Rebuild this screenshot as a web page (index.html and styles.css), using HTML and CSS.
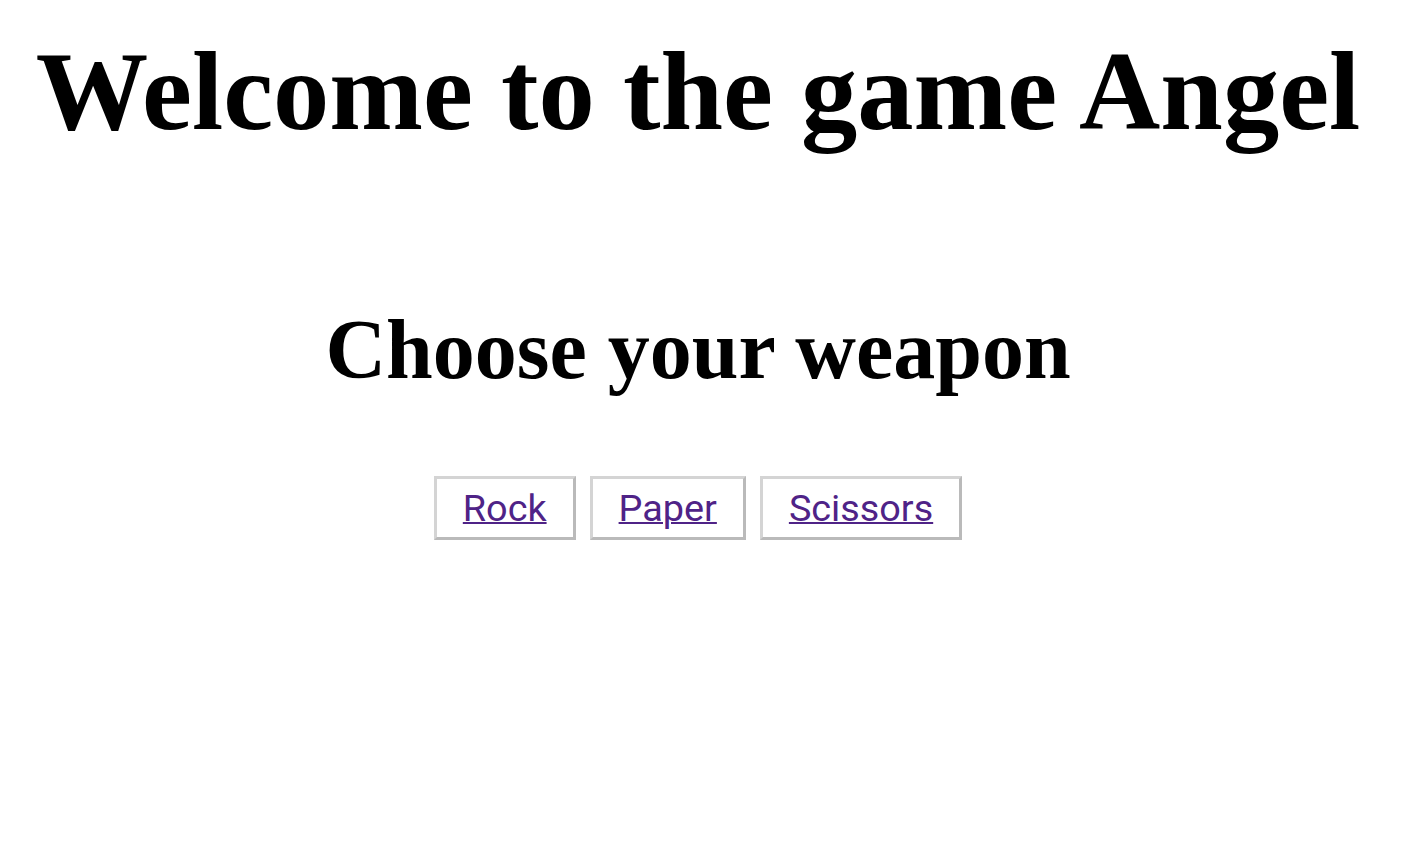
FILE: index.html
```html
<!DOCTYPE html>
<html>
<head>
<meta charset="utf-8">
<link rel="stylesheet" href="styles.css">
</head>
<body>
<div class="page">
  <h1 class="title">Welcome to the game Angel</h1>
  <h2 class="subtitle">Choose your weapon</h2>
  <div class="choices">
    <a class="choice" href="#">Rock</a>
    <a class="choice" href="#">Paper</a>
    <a class="choice" href="#">Scissors</a>
  </div>
</div>
</body>
</html>
```
FILE: styles.css
```css
body {
  margin: 0;
  background: #fff;
  font-family: "Liberation Serif", "Times New Roman", serif;
  color: #000;
}
.page {
  display: flex;
  flex-direction: column;
  align-items: center;
  padding: 30px 10px 0 0;
}
.title {
  margin: 0;
  font-size: 112.5px;
  font-weight: bold;
  line-height: 1.1;
  white-space: nowrap;
}
.subtitle {
  margin: 150px 0 0;
  font-size: 84px;
  font-weight: bold;
  line-height: 1.1;
}
.choices {
  display: flex;
  gap: 14px;
  margin-top: 80px;
}
.choice {
  font-family: Roboto, "Noto Sans", sans-serif;
  font-size: 37.8px;
  line-height: 44px;
  color: #4f2387;
  text-decoration: underline;
  text-decoration-thickness: 2px;
  padding: 7px 26px;
  border: 3px solid;
  border-color: #d4d4d4 #bababa #bababa #d4d4d4;
}
```
